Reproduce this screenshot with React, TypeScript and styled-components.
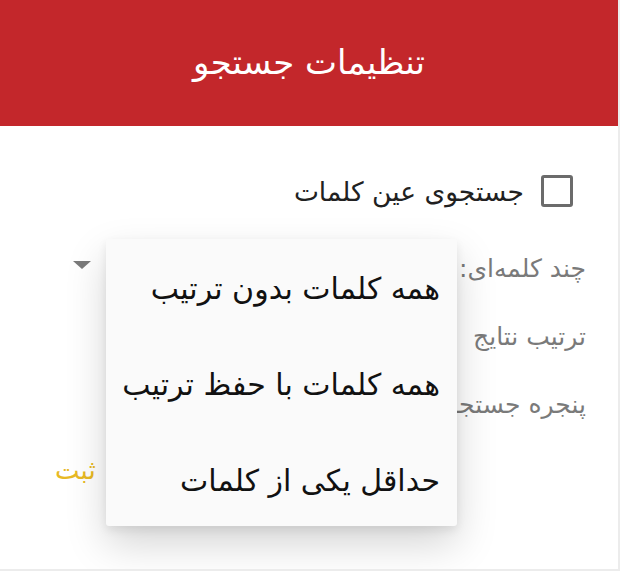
import React from "react";
import styled, { createGlobalStyle } from "styled-components";

const Global = createGlobalStyle`
  html, body { margin: 0; padding: 0; background: #ffffff; }
  body { font-family: "DejaVu Sans", "Noto Sans", sans-serif; }
`;

const Dialog = styled.div`
  position: relative;
  width: 620px;
  height: 571px;
  box-sizing: border-box;
  direction: rtl;
  background: #ffffff;
  border-right: 2px solid #ececec;
  border-bottom: 2px solid #ececec;
  overflow: hidden;
`;

const Header = styled.header`
  height: 126px;
  background: #c3272b;
  color: #ffffff;
  display: flex;
  align-items: center;
  justify-content: center;
  font-size: 34px;
  padding-bottom: 2px;
  box-sizing: border-box;
`;

const Body = styled.div`
  padding: 49px 32px 0 73px;
  display: flex;
  flex-direction: column;
`;

const CheckRow = styled.label`
  display: flex;
  align-items: center;
  gap: 17px;
  height: 32px;
  padding-right: 13px;
  margin-bottom: 27px;
  font-size: 26.5px;
  color: #212121;
`;

const Box = styled.span`
  width: 32px;
  height: 32px;
  box-sizing: border-box;
  border: 3px solid #6b6b6b;
  border-radius: 3px;
  flex: none;
`;

const Row = styled.div`
  display: flex;
  align-items: center;
  justify-content: space-between;
  height: 68px;
  font-size: 25px;
  color: #7a7a7a;
`;

const Arrow = styled.span`
  width: 0;
  height: 0;
  border-left: 9px solid transparent;
  border-right: 9px solid transparent;
  border-top: 8px solid #7a7a7a;
  margin-bottom: 6px;
`;

const Footer = styled.div`
  display: flex;
  justify-content: flex-end;
  align-items: center;
  gap: 40px;
  height: 64px;
  margin-left: -18px;
`;

const TextButton = styled.span`
  font-size: 26px;
  color: #e8b923;
`;

const Menu = styled.ul`
  position: absolute;
  left: 106px;
  top: 239px;
  width: 351px;
  height: 287px;
  margin: 0;
  padding: 0;
  list-style: none;
  background: #fafafa;
  border-radius: 3px;
  box-shadow: 0 18px 40px rgba(0, 0, 0, 0.17), 0 4px 10px rgba(0, 0, 0, 0.08);
  display: flex;
  flex-direction: column;
`;

const MenuItem = styled.li`
  flex: 1;
  display: flex;
  align-items: center;
  padding: 4px 17px 0 0;
  font-size: 30px;
  color: #111111;
`;

export default function App() {
  return (
    <>
      <Global />
      <Dialog>
        <Header>تنظیمات جستجو</Header>
        <Body>
          <CheckRow>
            <Box />
            <span>جستجوی عین کلمات</span>
          </CheckRow>
          <Row>
            <span>چند کلمه‌ای:</span>
            <Arrow />
          </Row>
          <Row>
            <span>ترتیب نتایج</span>
          </Row>
          <Row>
            <span>پنجره جستجو</span>
          </Row>
          <Footer>
            <TextButton>انصراف</TextButton>
            <TextButton>ثبت</TextButton>
          </Footer>
        </Body>
        <Menu>
          <MenuItem>همه کلمات بدون ترتیب</MenuItem>
          <MenuItem>همه کلمات با حفظ ترتیب</MenuItem>
          <MenuItem>حداقل یکی از کلمات</MenuItem>
        </Menu>
      </Dialog>
    </>
  );
}
